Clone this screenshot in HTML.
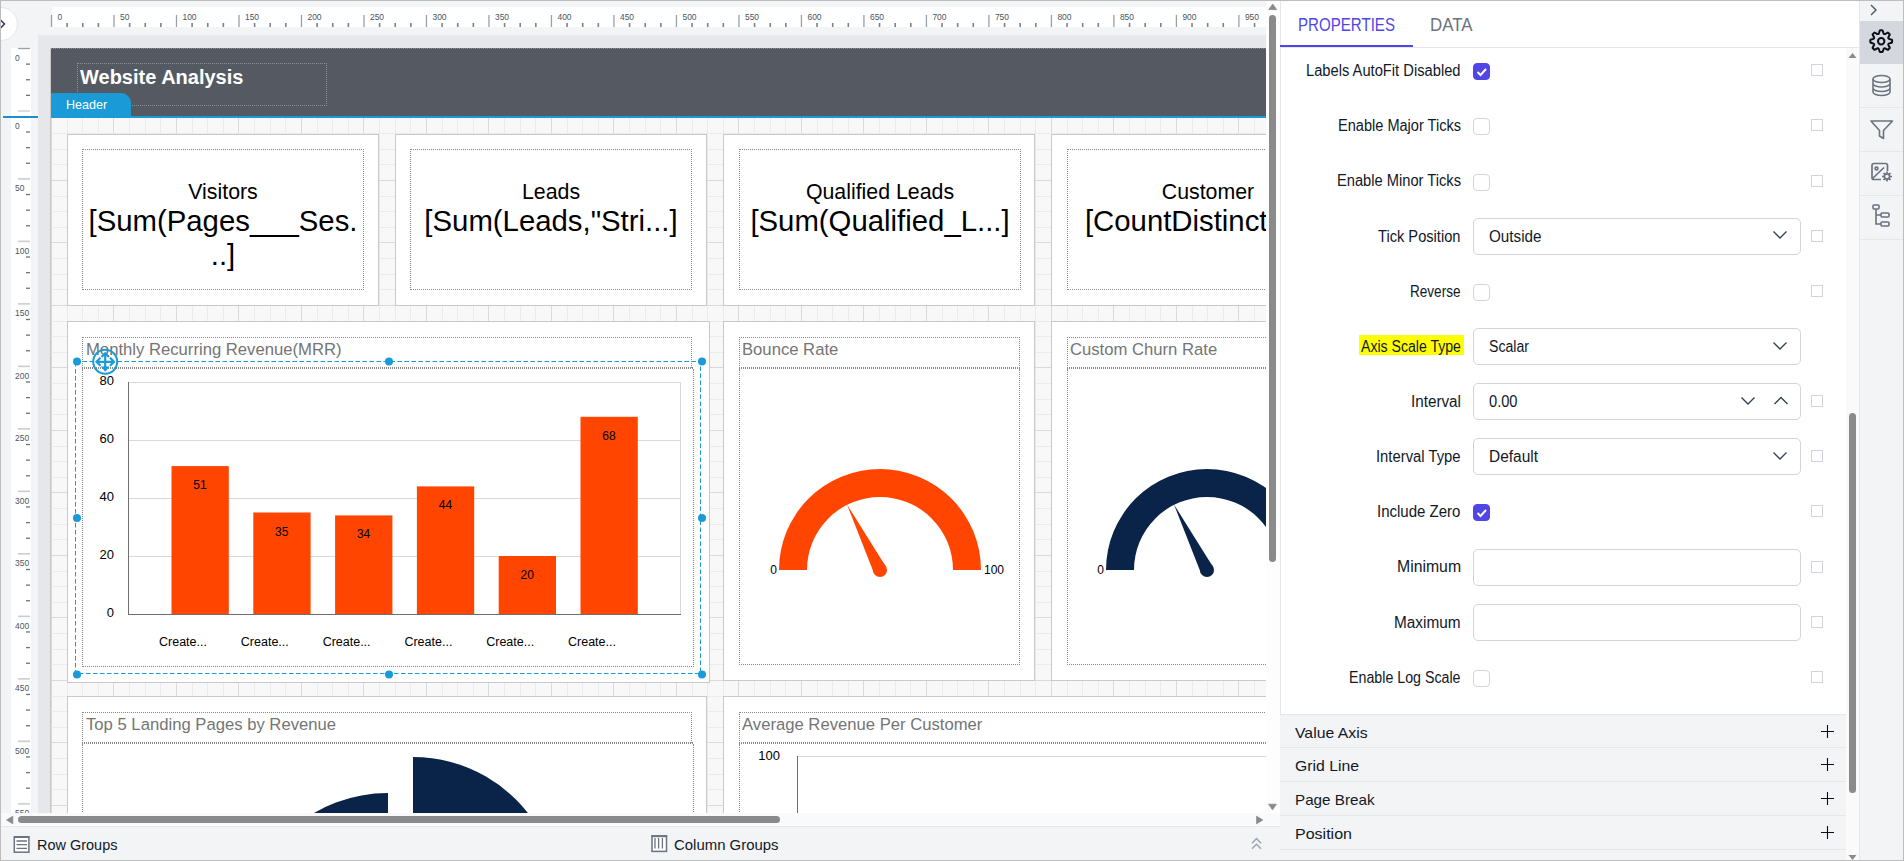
<!DOCTYPE html><html><head><meta charset="utf-8"><style>
*{box-sizing:border-box;margin:0;padding:0}
html,body{width:1904px;height:861px;overflow:hidden}
body{position:relative;background:#f3f4f6;font-family:"Liberation Sans",sans-serif;color:#111827}
.a{position:absolute}
.t{position:absolute;white-space:nowrap;line-height:1}
.dot{position:absolute;border:1px dotted #8a8a8a}
.card{position:absolute;background:#fff;border:1px solid #c9c9c9}
.lbl{position:absolute;white-space:nowrap;font-size:14.5px;line-height:1;text-align:right;right:444px;color:#1f2937}
.cb{position:absolute;left:1473px;width:17px;height:17px;border:1px solid #d1d5db;border-radius:4px;background:#fff}
.cbon{background:#4f46e5;border-color:#4f46e5}
.sq{position:absolute;left:1811px;width:12px;height:12px;border:1px solid #d1d5db;background:#fff}
.dd{position:absolute;left:1473px;width:328px;height:37px;border:1px solid #d1d5db;border-radius:5px;background:#fff}
.ddt{position:absolute;left:15px;top:10px;font-size:14.5px;line-height:1;color:#1f2937;white-space:nowrap}
.sec{position:absolute;left:1280px;width:566px;height:34px;background:#f3f4f6;border-top:1px solid #e5e7eb}
.sect{position:absolute;left:15px;top:10px;font-size:15px;line-height:1;color:#1f2937}
</style></head><body>
<div class="a" style="left:38px;top:35px;width:1228px;height:778px;background:#e5e7eb"></div>
<svg class="a" style="left:0;top:0" width="1266" height="35"><rect x="52" y="7" width="1214" height="20" fill="#fff"/><line x1="51.50" y1="15" x2="51.50" y2="27" stroke="#9aa0a8" stroke-width="1.3"/><text x="57.50" y="19.9" font-family="Liberation Sans" font-size="9.6" fill="#4b5563" transform="translate(57.50 0) scale(0.88 1) translate(-57.50 0)">0</text><line x1="67.12" y1="23" x2="67.12" y2="27" stroke="#7b828c" stroke-width="1.6"/><line x1="82.75" y1="23" x2="82.75" y2="27" stroke="#7b828c" stroke-width="1.6"/><line x1="98.37" y1="23" x2="98.37" y2="27" stroke="#7b828c" stroke-width="1.6"/><line x1="114.00" y1="15" x2="114.00" y2="27" stroke="#9aa0a8" stroke-width="1.3"/><text x="120.00" y="19.9" font-family="Liberation Sans" font-size="9.6" fill="#4b5563" transform="translate(120.00 0) scale(0.88 1) translate(-120.00 0)">50</text><line x1="129.62" y1="23" x2="129.62" y2="27" stroke="#7b828c" stroke-width="1.6"/><line x1="145.24" y1="23" x2="145.24" y2="27" stroke="#7b828c" stroke-width="1.6"/><line x1="160.87" y1="23" x2="160.87" y2="27" stroke="#7b828c" stroke-width="1.6"/><line x1="176.49" y1="15" x2="176.49" y2="27" stroke="#9aa0a8" stroke-width="1.3"/><text x="182.49" y="19.9" font-family="Liberation Sans" font-size="9.6" fill="#4b5563" transform="translate(182.49 0) scale(0.88 1) translate(-182.49 0)">100</text><line x1="192.11" y1="23" x2="192.11" y2="27" stroke="#7b828c" stroke-width="1.6"/><line x1="207.74" y1="23" x2="207.74" y2="27" stroke="#7b828c" stroke-width="1.6"/><line x1="223.36" y1="23" x2="223.36" y2="27" stroke="#7b828c" stroke-width="1.6"/><line x1="238.99" y1="15" x2="238.99" y2="27" stroke="#9aa0a8" stroke-width="1.3"/><text x="244.99" y="19.9" font-family="Liberation Sans" font-size="9.6" fill="#4b5563" transform="translate(244.99 0) scale(0.88 1) translate(-244.99 0)">150</text><line x1="254.61" y1="23" x2="254.61" y2="27" stroke="#7b828c" stroke-width="1.6"/><line x1="270.23" y1="23" x2="270.23" y2="27" stroke="#7b828c" stroke-width="1.6"/><line x1="285.86" y1="23" x2="285.86" y2="27" stroke="#7b828c" stroke-width="1.6"/><line x1="301.48" y1="15" x2="301.48" y2="27" stroke="#9aa0a8" stroke-width="1.3"/><text x="307.48" y="19.9" font-family="Liberation Sans" font-size="9.6" fill="#4b5563" transform="translate(307.48 0) scale(0.88 1) translate(-307.48 0)">200</text><line x1="317.10" y1="23" x2="317.10" y2="27" stroke="#7b828c" stroke-width="1.6"/><line x1="332.73" y1="23" x2="332.73" y2="27" stroke="#7b828c" stroke-width="1.6"/><line x1="348.35" y1="23" x2="348.35" y2="27" stroke="#7b828c" stroke-width="1.6"/><line x1="363.98" y1="15" x2="363.98" y2="27" stroke="#9aa0a8" stroke-width="1.3"/><text x="369.98" y="19.9" font-family="Liberation Sans" font-size="9.6" fill="#4b5563" transform="translate(369.98 0) scale(0.88 1) translate(-369.98 0)">250</text><line x1="379.60" y1="23" x2="379.60" y2="27" stroke="#7b828c" stroke-width="1.6"/><line x1="395.22" y1="23" x2="395.22" y2="27" stroke="#7b828c" stroke-width="1.6"/><line x1="410.85" y1="23" x2="410.85" y2="27" stroke="#7b828c" stroke-width="1.6"/><line x1="426.47" y1="15" x2="426.47" y2="27" stroke="#9aa0a8" stroke-width="1.3"/><text x="432.47" y="19.9" font-family="Liberation Sans" font-size="9.6" fill="#4b5563" transform="translate(432.47 0) scale(0.88 1) translate(-432.47 0)">300</text><line x1="442.09" y1="23" x2="442.09" y2="27" stroke="#7b828c" stroke-width="1.6"/><line x1="457.72" y1="23" x2="457.72" y2="27" stroke="#7b828c" stroke-width="1.6"/><line x1="473.34" y1="23" x2="473.34" y2="27" stroke="#7b828c" stroke-width="1.6"/><line x1="488.97" y1="15" x2="488.97" y2="27" stroke="#9aa0a8" stroke-width="1.3"/><text x="494.97" y="19.9" font-family="Liberation Sans" font-size="9.6" fill="#4b5563" transform="translate(494.97 0) scale(0.88 1) translate(-494.97 0)">350</text><line x1="504.59" y1="23" x2="504.59" y2="27" stroke="#7b828c" stroke-width="1.6"/><line x1="520.21" y1="23" x2="520.21" y2="27" stroke="#7b828c" stroke-width="1.6"/><line x1="535.84" y1="23" x2="535.84" y2="27" stroke="#7b828c" stroke-width="1.6"/><line x1="551.46" y1="15" x2="551.46" y2="27" stroke="#9aa0a8" stroke-width="1.3"/><text x="557.46" y="19.9" font-family="Liberation Sans" font-size="9.6" fill="#4b5563" transform="translate(557.46 0) scale(0.88 1) translate(-557.46 0)">400</text><line x1="567.08" y1="23" x2="567.08" y2="27" stroke="#7b828c" stroke-width="1.6"/><line x1="582.71" y1="23" x2="582.71" y2="27" stroke="#7b828c" stroke-width="1.6"/><line x1="598.33" y1="23" x2="598.33" y2="27" stroke="#7b828c" stroke-width="1.6"/><line x1="613.96" y1="15" x2="613.96" y2="27" stroke="#9aa0a8" stroke-width="1.3"/><text x="619.96" y="19.9" font-family="Liberation Sans" font-size="9.6" fill="#4b5563" transform="translate(619.96 0) scale(0.88 1) translate(-619.96 0)">450</text><line x1="629.58" y1="23" x2="629.58" y2="27" stroke="#7b828c" stroke-width="1.6"/><line x1="645.20" y1="23" x2="645.20" y2="27" stroke="#7b828c" stroke-width="1.6"/><line x1="660.83" y1="23" x2="660.83" y2="27" stroke="#7b828c" stroke-width="1.6"/><line x1="676.45" y1="15" x2="676.45" y2="27" stroke="#9aa0a8" stroke-width="1.3"/><text x="682.45" y="19.9" font-family="Liberation Sans" font-size="9.6" fill="#4b5563" transform="translate(682.45 0) scale(0.88 1) translate(-682.45 0)">500</text><line x1="692.07" y1="23" x2="692.07" y2="27" stroke="#7b828c" stroke-width="1.6"/><line x1="707.70" y1="23" x2="707.70" y2="27" stroke="#7b828c" stroke-width="1.6"/><line x1="723.32" y1="23" x2="723.32" y2="27" stroke="#7b828c" stroke-width="1.6"/><line x1="738.95" y1="15" x2="738.95" y2="27" stroke="#9aa0a8" stroke-width="1.3"/><text x="744.95" y="19.9" font-family="Liberation Sans" font-size="9.6" fill="#4b5563" transform="translate(744.95 0) scale(0.88 1) translate(-744.95 0)">550</text><line x1="754.57" y1="23" x2="754.57" y2="27" stroke="#7b828c" stroke-width="1.6"/><line x1="770.19" y1="23" x2="770.19" y2="27" stroke="#7b828c" stroke-width="1.6"/><line x1="785.82" y1="23" x2="785.82" y2="27" stroke="#7b828c" stroke-width="1.6"/><line x1="801.44" y1="15" x2="801.44" y2="27" stroke="#9aa0a8" stroke-width="1.3"/><text x="807.44" y="19.9" font-family="Liberation Sans" font-size="9.6" fill="#4b5563" transform="translate(807.44 0) scale(0.88 1) translate(-807.44 0)">600</text><line x1="817.06" y1="23" x2="817.06" y2="27" stroke="#7b828c" stroke-width="1.6"/><line x1="832.69" y1="23" x2="832.69" y2="27" stroke="#7b828c" stroke-width="1.6"/><line x1="848.31" y1="23" x2="848.31" y2="27" stroke="#7b828c" stroke-width="1.6"/><line x1="863.94" y1="15" x2="863.94" y2="27" stroke="#9aa0a8" stroke-width="1.3"/><text x="869.94" y="19.9" font-family="Liberation Sans" font-size="9.6" fill="#4b5563" transform="translate(869.94 0) scale(0.88 1) translate(-869.94 0)">650</text><line x1="879.56" y1="23" x2="879.56" y2="27" stroke="#7b828c" stroke-width="1.6"/><line x1="895.18" y1="23" x2="895.18" y2="27" stroke="#7b828c" stroke-width="1.6"/><line x1="910.81" y1="23" x2="910.81" y2="27" stroke="#7b828c" stroke-width="1.6"/><line x1="926.43" y1="15" x2="926.43" y2="27" stroke="#9aa0a8" stroke-width="1.3"/><text x="932.43" y="19.9" font-family="Liberation Sans" font-size="9.6" fill="#4b5563" transform="translate(932.43 0) scale(0.88 1) translate(-932.43 0)">700</text><line x1="942.05" y1="23" x2="942.05" y2="27" stroke="#7b828c" stroke-width="1.6"/><line x1="957.68" y1="23" x2="957.68" y2="27" stroke="#7b828c" stroke-width="1.6"/><line x1="973.30" y1="23" x2="973.30" y2="27" stroke="#7b828c" stroke-width="1.6"/><line x1="988.92" y1="15" x2="988.92" y2="27" stroke="#9aa0a8" stroke-width="1.3"/><text x="994.92" y="19.9" font-family="Liberation Sans" font-size="9.6" fill="#4b5563" transform="translate(994.92 0) scale(0.88 1) translate(-994.92 0)">750</text><line x1="1004.55" y1="23" x2="1004.55" y2="27" stroke="#7b828c" stroke-width="1.6"/><line x1="1020.17" y1="23" x2="1020.17" y2="27" stroke="#7b828c" stroke-width="1.6"/><line x1="1035.80" y1="23" x2="1035.80" y2="27" stroke="#7b828c" stroke-width="1.6"/><line x1="1051.42" y1="15" x2="1051.42" y2="27" stroke="#9aa0a8" stroke-width="1.3"/><text x="1057.42" y="19.9" font-family="Liberation Sans" font-size="9.6" fill="#4b5563" transform="translate(1057.42 0) scale(0.88 1) translate(-1057.42 0)">800</text><line x1="1067.04" y1="23" x2="1067.04" y2="27" stroke="#7b828c" stroke-width="1.6"/><line x1="1082.67" y1="23" x2="1082.67" y2="27" stroke="#7b828c" stroke-width="1.6"/><line x1="1098.29" y1="23" x2="1098.29" y2="27" stroke="#7b828c" stroke-width="1.6"/><line x1="1113.91" y1="15" x2="1113.91" y2="27" stroke="#9aa0a8" stroke-width="1.3"/><text x="1119.91" y="19.9" font-family="Liberation Sans" font-size="9.6" fill="#4b5563" transform="translate(1119.91 0) scale(0.88 1) translate(-1119.91 0)">850</text><line x1="1129.54" y1="23" x2="1129.54" y2="27" stroke="#7b828c" stroke-width="1.6"/><line x1="1145.16" y1="23" x2="1145.16" y2="27" stroke="#7b828c" stroke-width="1.6"/><line x1="1160.79" y1="23" x2="1160.79" y2="27" stroke="#7b828c" stroke-width="1.6"/><line x1="1176.41" y1="15" x2="1176.41" y2="27" stroke="#9aa0a8" stroke-width="1.3"/><text x="1182.41" y="19.9" font-family="Liberation Sans" font-size="9.6" fill="#4b5563" transform="translate(1182.41 0) scale(0.88 1) translate(-1182.41 0)">900</text><line x1="1192.03" y1="23" x2="1192.03" y2="27" stroke="#7b828c" stroke-width="1.6"/><line x1="1207.66" y1="23" x2="1207.66" y2="27" stroke="#7b828c" stroke-width="1.6"/><line x1="1223.28" y1="23" x2="1223.28" y2="27" stroke="#7b828c" stroke-width="1.6"/><line x1="1238.90" y1="15" x2="1238.90" y2="27" stroke="#9aa0a8" stroke-width="1.3"/><text x="1244.90" y="19.9" font-family="Liberation Sans" font-size="9.6" fill="#4b5563" transform="translate(1244.90 0) scale(0.88 1) translate(-1244.90 0)">950</text><line x1="1254.53" y1="23" x2="1254.53" y2="27" stroke="#7b828c" stroke-width="1.6"/></svg>
<svg class="a" style="left:0;top:0" width="38" height="813"><rect x="11" y="48" width="20" height="765" fill="#fff"/><line x1="18" y1="48.50" x2="30" y2="48.50" stroke="#9aa0a8" stroke-width="1.3"/><text x="15" y="61.30" font-family="Liberation Sans" font-size="9.6" fill="#4b5563" transform="translate(15 0) scale(0.88 1) translate(-15 0)">0</text><line x1="26" y1="64.12" x2="30" y2="64.12" stroke="#6b7280" stroke-width="1.3"/><line x1="26" y1="79.75" x2="30" y2="79.75" stroke="#6b7280" stroke-width="1.3"/><line x1="26" y1="95.37" x2="30" y2="95.37" stroke="#6b7280" stroke-width="1.3"/><line x1="18" y1="111.00" x2="30" y2="111.00" stroke="#c9ccd1" stroke-width="1.3"/><text x="15" y="128.90" font-family="Liberation Sans" font-size="9.6" fill="#4b5563" transform="translate(15 0) scale(0.88 1) translate(-15 0)">0</text><line x1="26" y1="132.02" x2="30" y2="132.02" stroke="#6b7280" stroke-width="1.3"/><line x1="26" y1="147.65" x2="30" y2="147.65" stroke="#6b7280" stroke-width="1.3"/><line x1="26" y1="163.27" x2="30" y2="163.27" stroke="#6b7280" stroke-width="1.3"/><line x1="18" y1="178.90" x2="30" y2="178.90" stroke="#c9ccd1" stroke-width="1.6"/><text x="15" y="191.40" font-family="Liberation Sans" font-size="9.6" fill="#4b5563" transform="translate(15 0) scale(0.88 1) translate(-15 0)">50</text><line x1="26" y1="194.52" x2="30" y2="194.52" stroke="#6b7280" stroke-width="1.3"/><line x1="26" y1="210.14" x2="30" y2="210.14" stroke="#6b7280" stroke-width="1.3"/><line x1="26" y1="225.77" x2="30" y2="225.77" stroke="#6b7280" stroke-width="1.3"/><line x1="18" y1="241.39" x2="30" y2="241.39" stroke="#c9ccd1" stroke-width="1.6"/><text x="15" y="253.89" font-family="Liberation Sans" font-size="9.6" fill="#4b5563" transform="translate(15 0) scale(0.88 1) translate(-15 0)">100</text><line x1="26" y1="257.01" x2="30" y2="257.01" stroke="#6b7280" stroke-width="1.3"/><line x1="26" y1="272.64" x2="30" y2="272.64" stroke="#6b7280" stroke-width="1.3"/><line x1="26" y1="288.26" x2="30" y2="288.26" stroke="#6b7280" stroke-width="1.3"/><line x1="18" y1="303.88" x2="30" y2="303.88" stroke="#c9ccd1" stroke-width="1.6"/><text x="15" y="316.38" font-family="Liberation Sans" font-size="9.6" fill="#4b5563" transform="translate(15 0) scale(0.88 1) translate(-15 0)">150</text><line x1="26" y1="319.51" x2="30" y2="319.51" stroke="#6b7280" stroke-width="1.3"/><line x1="26" y1="335.13" x2="30" y2="335.13" stroke="#6b7280" stroke-width="1.3"/><line x1="26" y1="350.76" x2="30" y2="350.76" stroke="#6b7280" stroke-width="1.3"/><line x1="18" y1="366.38" x2="30" y2="366.38" stroke="#c9ccd1" stroke-width="1.6"/><text x="15" y="378.88" font-family="Liberation Sans" font-size="9.6" fill="#4b5563" transform="translate(15 0) scale(0.88 1) translate(-15 0)">200</text><line x1="26" y1="382.00" x2="30" y2="382.00" stroke="#6b7280" stroke-width="1.3"/><line x1="26" y1="397.63" x2="30" y2="397.63" stroke="#6b7280" stroke-width="1.3"/><line x1="26" y1="413.25" x2="30" y2="413.25" stroke="#6b7280" stroke-width="1.3"/><line x1="18" y1="428.88" x2="30" y2="428.88" stroke="#c9ccd1" stroke-width="1.6"/><text x="15" y="441.38" font-family="Liberation Sans" font-size="9.6" fill="#4b5563" transform="translate(15 0) scale(0.88 1) translate(-15 0)">250</text><line x1="26" y1="444.50" x2="30" y2="444.50" stroke="#6b7280" stroke-width="1.3"/><line x1="26" y1="460.12" x2="30" y2="460.12" stroke="#6b7280" stroke-width="1.3"/><line x1="26" y1="475.75" x2="30" y2="475.75" stroke="#6b7280" stroke-width="1.3"/><line x1="18" y1="491.37" x2="30" y2="491.37" stroke="#c9ccd1" stroke-width="1.6"/><text x="15" y="503.87" font-family="Liberation Sans" font-size="9.6" fill="#4b5563" transform="translate(15 0) scale(0.88 1) translate(-15 0)">300</text><line x1="26" y1="506.99" x2="30" y2="506.99" stroke="#6b7280" stroke-width="1.3"/><line x1="26" y1="522.62" x2="30" y2="522.62" stroke="#6b7280" stroke-width="1.3"/><line x1="26" y1="538.24" x2="30" y2="538.24" stroke="#6b7280" stroke-width="1.3"/><line x1="18" y1="553.87" x2="30" y2="553.87" stroke="#c9ccd1" stroke-width="1.6"/><text x="15" y="566.37" font-family="Liberation Sans" font-size="9.6" fill="#4b5563" transform="translate(15 0) scale(0.88 1) translate(-15 0)">350</text><line x1="26" y1="569.49" x2="30" y2="569.49" stroke="#6b7280" stroke-width="1.3"/><line x1="26" y1="585.11" x2="30" y2="585.11" stroke="#6b7280" stroke-width="1.3"/><line x1="26" y1="600.74" x2="30" y2="600.74" stroke="#6b7280" stroke-width="1.3"/><line x1="18" y1="616.36" x2="30" y2="616.36" stroke="#c9ccd1" stroke-width="1.6"/><text x="15" y="628.86" font-family="Liberation Sans" font-size="9.6" fill="#4b5563" transform="translate(15 0) scale(0.88 1) translate(-15 0)">400</text><line x1="26" y1="631.98" x2="30" y2="631.98" stroke="#6b7280" stroke-width="1.3"/><line x1="26" y1="647.61" x2="30" y2="647.61" stroke="#6b7280" stroke-width="1.3"/><line x1="26" y1="663.23" x2="30" y2="663.23" stroke="#6b7280" stroke-width="1.3"/><line x1="18" y1="678.85" x2="30" y2="678.85" stroke="#c9ccd1" stroke-width="1.6"/><text x="15" y="691.35" font-family="Liberation Sans" font-size="9.6" fill="#4b5563" transform="translate(15 0) scale(0.88 1) translate(-15 0)">450</text><line x1="26" y1="694.48" x2="30" y2="694.48" stroke="#6b7280" stroke-width="1.3"/><line x1="26" y1="710.10" x2="30" y2="710.10" stroke="#6b7280" stroke-width="1.3"/><line x1="26" y1="725.73" x2="30" y2="725.73" stroke="#6b7280" stroke-width="1.3"/><line x1="18" y1="741.35" x2="30" y2="741.35" stroke="#c9ccd1" stroke-width="1.6"/><text x="15" y="753.85" font-family="Liberation Sans" font-size="9.6" fill="#4b5563" transform="translate(15 0) scale(0.88 1) translate(-15 0)">500</text><line x1="26" y1="756.97" x2="30" y2="756.97" stroke="#6b7280" stroke-width="1.3"/><line x1="26" y1="772.60" x2="30" y2="772.60" stroke="#6b7280" stroke-width="1.3"/><line x1="26" y1="788.22" x2="30" y2="788.22" stroke="#6b7280" stroke-width="1.3"/><line x1="18" y1="803.84" x2="30" y2="803.84" stroke="#c9ccd1" stroke-width="1.6"/><text x="15" y="816.34" font-family="Liberation Sans" font-size="9.6" fill="#4b5563" transform="translate(15 0) scale(0.88 1) translate(-15 0)">550</text><rect x="3" y="116" width="35" height="2" fill="#1a8fd0"/></svg>
<svg class="a" style="left:0;top:0" width="1266" height="813"><rect x="50" y="118" width="1216" height="695" fill="#f8f8f8"/><line x1="51.5" y1="118" x2="51.5" y2="813" stroke="#dadada"/><line x1="67.5" y1="118" x2="67.5" y2="813" stroke="#ebebeb"/><line x1="82.5" y1="118" x2="82.5" y2="813" stroke="#ebebeb"/><line x1="98.5" y1="118" x2="98.5" y2="813" stroke="#ebebeb"/><line x1="113.5" y1="118" x2="113.5" y2="813" stroke="#dadada"/><line x1="129.5" y1="118" x2="129.5" y2="813" stroke="#ebebeb"/><line x1="145.5" y1="118" x2="145.5" y2="813" stroke="#ebebeb"/><line x1="160.5" y1="118" x2="160.5" y2="813" stroke="#ebebeb"/><line x1="176.5" y1="118" x2="176.5" y2="813" stroke="#dadada"/><line x1="192.5" y1="118" x2="192.5" y2="813" stroke="#ebebeb"/><line x1="207.5" y1="118" x2="207.5" y2="813" stroke="#ebebeb"/><line x1="223.5" y1="118" x2="223.5" y2="813" stroke="#ebebeb"/><line x1="238.5" y1="118" x2="238.5" y2="813" stroke="#dadada"/><line x1="254.5" y1="118" x2="254.5" y2="813" stroke="#ebebeb"/><line x1="270.5" y1="118" x2="270.5" y2="813" stroke="#ebebeb"/><line x1="285.5" y1="118" x2="285.5" y2="813" stroke="#ebebeb"/><line x1="301.5" y1="118" x2="301.5" y2="813" stroke="#dadada"/><line x1="317.5" y1="118" x2="317.5" y2="813" stroke="#ebebeb"/><line x1="332.5" y1="118" x2="332.5" y2="813" stroke="#ebebeb"/><line x1="348.5" y1="118" x2="348.5" y2="813" stroke="#ebebeb"/><line x1="363.5" y1="118" x2="363.5" y2="813" stroke="#dadada"/><line x1="379.5" y1="118" x2="379.5" y2="813" stroke="#ebebeb"/><line x1="395.5" y1="118" x2="395.5" y2="813" stroke="#ebebeb"/><line x1="410.5" y1="118" x2="410.5" y2="813" stroke="#ebebeb"/><line x1="426.5" y1="118" x2="426.5" y2="813" stroke="#dadada"/><line x1="442.5" y1="118" x2="442.5" y2="813" stroke="#ebebeb"/><line x1="457.5" y1="118" x2="457.5" y2="813" stroke="#ebebeb"/><line x1="473.5" y1="118" x2="473.5" y2="813" stroke="#ebebeb"/><line x1="488.5" y1="118" x2="488.5" y2="813" stroke="#dadada"/><line x1="504.5" y1="118" x2="504.5" y2="813" stroke="#ebebeb"/><line x1="520.5" y1="118" x2="520.5" y2="813" stroke="#ebebeb"/><line x1="535.5" y1="118" x2="535.5" y2="813" stroke="#ebebeb"/><line x1="551.5" y1="118" x2="551.5" y2="813" stroke="#dadada"/><line x1="567.5" y1="118" x2="567.5" y2="813" stroke="#ebebeb"/><line x1="582.5" y1="118" x2="582.5" y2="813" stroke="#ebebeb"/><line x1="598.5" y1="118" x2="598.5" y2="813" stroke="#ebebeb"/><line x1="613.5" y1="118" x2="613.5" y2="813" stroke="#dadada"/><line x1="629.5" y1="118" x2="629.5" y2="813" stroke="#ebebeb"/><line x1="645.5" y1="118" x2="645.5" y2="813" stroke="#ebebeb"/><line x1="660.5" y1="118" x2="660.5" y2="813" stroke="#ebebeb"/><line x1="676.5" y1="118" x2="676.5" y2="813" stroke="#dadada"/><line x1="692.5" y1="118" x2="692.5" y2="813" stroke="#ebebeb"/><line x1="707.5" y1="118" x2="707.5" y2="813" stroke="#ebebeb"/><line x1="723.5" y1="118" x2="723.5" y2="813" stroke="#ebebeb"/><line x1="738.5" y1="118" x2="738.5" y2="813" stroke="#dadada"/><line x1="754.5" y1="118" x2="754.5" y2="813" stroke="#ebebeb"/><line x1="770.5" y1="118" x2="770.5" y2="813" stroke="#ebebeb"/><line x1="785.5" y1="118" x2="785.5" y2="813" stroke="#ebebeb"/><line x1="801.5" y1="118" x2="801.5" y2="813" stroke="#dadada"/><line x1="817.5" y1="118" x2="817.5" y2="813" stroke="#ebebeb"/><line x1="832.5" y1="118" x2="832.5" y2="813" stroke="#ebebeb"/><line x1="848.5" y1="118" x2="848.5" y2="813" stroke="#ebebeb"/><line x1="863.5" y1="118" x2="863.5" y2="813" stroke="#dadada"/><line x1="879.5" y1="118" x2="879.5" y2="813" stroke="#ebebeb"/><line x1="895.5" y1="118" x2="895.5" y2="813" stroke="#ebebeb"/><line x1="910.5" y1="118" x2="910.5" y2="813" stroke="#ebebeb"/><line x1="926.5" y1="118" x2="926.5" y2="813" stroke="#dadada"/><line x1="942.5" y1="118" x2="942.5" y2="813" stroke="#ebebeb"/><line x1="957.5" y1="118" x2="957.5" y2="813" stroke="#ebebeb"/><line x1="973.5" y1="118" x2="973.5" y2="813" stroke="#ebebeb"/><line x1="988.5" y1="118" x2="988.5" y2="813" stroke="#dadada"/><line x1="1004.5" y1="118" x2="1004.5" y2="813" stroke="#ebebeb"/><line x1="1020.5" y1="118" x2="1020.5" y2="813" stroke="#ebebeb"/><line x1="1035.5" y1="118" x2="1035.5" y2="813" stroke="#ebebeb"/><line x1="1051.5" y1="118" x2="1051.5" y2="813" stroke="#dadada"/><line x1="1067.5" y1="118" x2="1067.5" y2="813" stroke="#ebebeb"/><line x1="1082.5" y1="118" x2="1082.5" y2="813" stroke="#ebebeb"/><line x1="1098.5" y1="118" x2="1098.5" y2="813" stroke="#ebebeb"/><line x1="1113.5" y1="118" x2="1113.5" y2="813" stroke="#dadada"/><line x1="1129.5" y1="118" x2="1129.5" y2="813" stroke="#ebebeb"/><line x1="1145.5" y1="118" x2="1145.5" y2="813" stroke="#ebebeb"/><line x1="1160.5" y1="118" x2="1160.5" y2="813" stroke="#ebebeb"/><line x1="1176.5" y1="118" x2="1176.5" y2="813" stroke="#dadada"/><line x1="1192.5" y1="118" x2="1192.5" y2="813" stroke="#ebebeb"/><line x1="1207.5" y1="118" x2="1207.5" y2="813" stroke="#ebebeb"/><line x1="1223.5" y1="118" x2="1223.5" y2="813" stroke="#ebebeb"/><line x1="1238.5" y1="118" x2="1238.5" y2="813" stroke="#dadada"/><line x1="1254.5" y1="118" x2="1254.5" y2="813" stroke="#ebebeb"/><line x1="50" y1="133.5" x2="1266" y2="133.5" stroke="#ebebeb"/><line x1="50" y1="149.5" x2="1266" y2="149.5" stroke="#ebebeb"/><line x1="50" y1="164.5" x2="1266" y2="164.5" stroke="#ebebeb"/><line x1="50" y1="180.5" x2="1266" y2="180.5" stroke="#dadada"/><line x1="50" y1="196.5" x2="1266" y2="196.5" stroke="#ebebeb"/><line x1="50" y1="211.5" x2="1266" y2="211.5" stroke="#ebebeb"/><line x1="50" y1="227.5" x2="1266" y2="227.5" stroke="#ebebeb"/><line x1="50" y1="242.5" x2="1266" y2="242.5" stroke="#dadada"/><line x1="50" y1="258.5" x2="1266" y2="258.5" stroke="#ebebeb"/><line x1="50" y1="274.5" x2="1266" y2="274.5" stroke="#ebebeb"/><line x1="50" y1="289.5" x2="1266" y2="289.5" stroke="#ebebeb"/><line x1="50" y1="305.5" x2="1266" y2="305.5" stroke="#dadada"/><line x1="50" y1="321.5" x2="1266" y2="321.5" stroke="#ebebeb"/><line x1="50" y1="336.5" x2="1266" y2="336.5" stroke="#ebebeb"/><line x1="50" y1="352.5" x2="1266" y2="352.5" stroke="#ebebeb"/><line x1="50" y1="367.5" x2="1266" y2="367.5" stroke="#dadada"/><line x1="50" y1="383.5" x2="1266" y2="383.5" stroke="#ebebeb"/><line x1="50" y1="399.5" x2="1266" y2="399.5" stroke="#ebebeb"/><line x1="50" y1="414.5" x2="1266" y2="414.5" stroke="#ebebeb"/><line x1="50" y1="430.5" x2="1266" y2="430.5" stroke="#dadada"/><line x1="50" y1="446.5" x2="1266" y2="446.5" stroke="#ebebeb"/><line x1="50" y1="461.5" x2="1266" y2="461.5" stroke="#ebebeb"/><line x1="50" y1="477.5" x2="1266" y2="477.5" stroke="#ebebeb"/><line x1="50" y1="492.5" x2="1266" y2="492.5" stroke="#dadada"/><line x1="50" y1="508.5" x2="1266" y2="508.5" stroke="#ebebeb"/><line x1="50" y1="524.5" x2="1266" y2="524.5" stroke="#ebebeb"/><line x1="50" y1="539.5" x2="1266" y2="539.5" stroke="#ebebeb"/><line x1="50" y1="555.5" x2="1266" y2="555.5" stroke="#dadada"/><line x1="50" y1="571.5" x2="1266" y2="571.5" stroke="#ebebeb"/><line x1="50" y1="586.5" x2="1266" y2="586.5" stroke="#ebebeb"/><line x1="50" y1="602.5" x2="1266" y2="602.5" stroke="#ebebeb"/><line x1="50" y1="617.5" x2="1266" y2="617.5" stroke="#dadada"/><line x1="50" y1="633.5" x2="1266" y2="633.5" stroke="#ebebeb"/><line x1="50" y1="649.5" x2="1266" y2="649.5" stroke="#ebebeb"/><line x1="50" y1="664.5" x2="1266" y2="664.5" stroke="#ebebeb"/><line x1="50" y1="680.5" x2="1266" y2="680.5" stroke="#dadada"/><line x1="50" y1="696.5" x2="1266" y2="696.5" stroke="#ebebeb"/><line x1="50" y1="711.5" x2="1266" y2="711.5" stroke="#ebebeb"/><line x1="50" y1="727.5" x2="1266" y2="727.5" stroke="#ebebeb"/><line x1="50" y1="742.5" x2="1266" y2="742.5" stroke="#dadada"/><line x1="50" y1="758.5" x2="1266" y2="758.5" stroke="#ebebeb"/><line x1="50" y1="774.5" x2="1266" y2="774.5" stroke="#ebebeb"/><line x1="50" y1="789.5" x2="1266" y2="789.5" stroke="#ebebeb"/><line x1="50" y1="805.5" x2="1266" y2="805.5" stroke="#dadada"/><line x1="50.5" y1="48" x2="50.5" y2="813" stroke="#c8c8c8"/></svg>
<div class="a" style="left:51px;top:48px;width:1215px;height:68px;background:#555a62;border-top:1px dotted #8d9299"></div>
<div class="a" style="left:51px;top:116px;width:1215px;height:2px;background:#1a9ad6"></div>
<div class="a" style="left:77px;top:63px;width:250px;height:43px;border:1px dotted #8d9299"></div>
<div class="t" style="left:80px;top:67px;font-size:20px;font-weight:bold;color:#fff">Website Analysis</div>
<div class="a" style="left:51px;top:93px;width:80px;height:25px;background:#1a9bd7;border-top-right-radius:10px"></div>
<div class="t" style="left:66px;top:97.5px;font-size:13.5px;color:#fff;transform:scaleX(0.9276);transform-origin:0 0;">Header</div>
<div class="card" style="left:67px;top:134px;width:312px;height:172px"></div>
<div class="dot" style="left:82px;top:149px;width:282px;height:141px"></div>
<div class="t" style="left:82px;top:182px;width:282px;text-align:center;font-size:21.33px;color:#000">Visitors</div>
<div class="t" style="left:82px;top:206px;width:282px;text-align:center;font-size:29.33px;color:#000;overflow:visible">[Sum(Pages___Ses.</div>
<div class="t" style="left:82px;top:240px;width:282px;text-align:center;font-size:29.33px;color:#000;overflow:visible">..]</div>
<div class="card" style="left:395px;top:134px;width:312px;height:172px"></div>
<div class="dot" style="left:410px;top:149px;width:282px;height:141px"></div>
<div class="t" style="left:410px;top:182px;width:282px;text-align:center;font-size:21.33px;color:#000">Leads</div>
<div class="t" style="left:410px;top:206px;width:282px;text-align:center;font-size:29.33px;color:#000;overflow:visible">[Sum(Leads,"Stri...]</div>
<div class="card" style="left:723px;top:134px;width:312px;height:172px"></div>
<div class="dot" style="left:739px;top:149px;width:282px;height:141px"></div>
<div class="t" style="left:739px;top:182px;width:282px;text-align:center;font-size:21.33px;color:#000">Qualified Leads</div>
<div class="t" style="left:739px;top:206px;width:282px;text-align:center;font-size:29.33px;color:#000;overflow:visible">[Sum(Qualified_L...]</div>
<div class="card" style="left:1051px;top:134px;width:312px;height:172px"></div>
<div class="dot" style="left:1067px;top:149px;width:282px;height:141px"></div>
<div class="t" style="left:1067px;top:182px;width:282px;text-align:center;font-size:21.33px;color:#000">Customer</div>
<div class="t" style="left:1067px;top:206px;width:282px;text-align:center;font-size:29.33px;color:#000;overflow:visible">[CountDistinct(C...]</div>
<div class="card" style="left:67px;top:321px;width:643px;height:362px"></div>
<div class="card" style="left:723px;top:321px;width:312px;height:360px"></div>
<div class="card" style="left:1051px;top:321px;width:312px;height:360px"></div>
<div class="card" style="left:67px;top:696px;width:640px;height:200px"></div>
<div class="card" style="left:723px;top:696px;width:640px;height:200px"></div>
<div class="dot" style="left:82px;top:337px;width:610px;height:31px;border-bottom:none"></div>
<div class="dot" style="left:82px;top:369px;width:612px;height:298px;border-top:none"></div>
<div class="a" style="left:82px;top:367px;width:612px;height:2px;background:repeating-linear-gradient(90deg,#8a8a8a 0 1px,transparent 1px 2px)"></div>
<div class="t" style="left:86px;top:342px;font-size:16.67px;color:#757575">Monthly Recurring Revenue(MRR)</div>
<svg class="a" style="left:0;top:0" width="720" height="700" font-family="Liberation Sans"><text x="114" y="617" text-anchor="end" font-size="13" fill="#000">0</text><line x1="129" y1="556.5" x2="681" y2="556.5" stroke="#d9d9d9"/><text x="114" y="559" text-anchor="end" font-size="13" fill="#000">20</text><line x1="129" y1="498.5" x2="681" y2="498.5" stroke="#d9d9d9"/><text x="114" y="501" text-anchor="end" font-size="13" fill="#000">40</text><line x1="129" y1="440.5" x2="681" y2="440.5" stroke="#d9d9d9"/><text x="114" y="443" text-anchor="end" font-size="13" fill="#000">60</text><line x1="129" y1="382.5" x2="681" y2="382.5" stroke="#d9d9d9"/><text x="114" y="385" text-anchor="end" font-size="13" fill="#000">80</text><line x1="680.5" y1="382" x2="680.5" y2="614" stroke="#d9d9d9"/><rect x="171.5" y="466.1" width="57.3" height="147.9" fill="#ff4500"/><text x="200.0" y="489.1" text-anchor="middle" font-size="12" fill="#000">51</text><text x="183.0" y="646" text-anchor="middle" font-size="12.5" fill="#000">Create...</text><rect x="253.3" y="512.5" width="57.3" height="101.5" fill="#ff4500"/><text x="281.8" y="535.5" text-anchor="middle" font-size="12" fill="#000">35</text><text x="264.8" y="646" text-anchor="middle" font-size="12.5" fill="#000">Create...</text><rect x="335.1" y="515.4" width="57.3" height="98.6" fill="#ff4500"/><text x="363.6" y="538.4" text-anchor="middle" font-size="12" fill="#000">34</text><text x="346.6" y="646" text-anchor="middle" font-size="12.5" fill="#000">Create...</text><rect x="416.9" y="486.4" width="57.3" height="127.6" fill="#ff4500"/><text x="445.4" y="509.4" text-anchor="middle" font-size="12" fill="#000">44</text><text x="428.4" y="646" text-anchor="middle" font-size="12.5" fill="#000">Create...</text><rect x="498.7" y="556.0" width="57.3" height="58.0" fill="#ff4500"/><text x="527.2" y="579.0" text-anchor="middle" font-size="12" fill="#000">20</text><text x="510.2" y="646" text-anchor="middle" font-size="12.5" fill="#000">Create...</text><rect x="580.5" y="416.8" width="57.3" height="197.2" fill="#ff4500"/><text x="609.0" y="439.8" text-anchor="middle" font-size="12" fill="#000">68</text><text x="592.0" y="646" text-anchor="middle" font-size="12.5" fill="#000">Create...</text><line x1="128.5" y1="382" x2="128.5" y2="615" stroke="#6f6f6f"/><line x1="128" y1="614.5" x2="681" y2="614.5" stroke="#6f6f6f"/><rect x="75.5" y="361.5" width="625" height="312" fill="none" stroke="#1a9ad6" stroke-dasharray="4.5 2.5"/><circle cx="77" cy="361.5" r="4" fill="#1a9ad6"/><circle cx="389" cy="361.5" r="4" fill="#1a9ad6"/><circle cx="702" cy="361.5" r="4" fill="#1a9ad6"/><circle cx="77" cy="518" r="4" fill="#1a9ad6"/><circle cx="702" cy="518" r="4" fill="#1a9ad6"/><circle cx="77" cy="674.5" r="4" fill="#1a9ad6"/><circle cx="389" cy="674.5" r="4" fill="#1a9ad6"/><circle cx="702" cy="674.5" r="4" fill="#1a9ad6"/><circle cx="105.2" cy="361.8" r="12" fill="none" stroke="#1a9ad6" stroke-width="2"/><path d="M105.2 354v15M97 361.8h16.5M101.5 357l3.7-3.7 3.7 3.7M100.5 357.8l-4 4 4 4M110 357.8l4 4-4 4" fill="none" stroke="#1a9ad6" stroke-width="2.2"/><path d="M100.8 366.5h8.8l-4.4 5.3Z" fill="#1a9ad6"/></svg>
<div class="dot" style="left:739px;top:337px;width:281px;height:31px;border-bottom:none"></div><div class="dot" style="left:739px;top:369px;width:281px;height:296px;border-top:none"></div><div class="a" style="left:739px;top:367px;width:281px;height:2px;background:repeating-linear-gradient(90deg,#8a8a8a 0 1px,transparent 1px 2px)"></div><div class="t" style="left:742px;top:342px;font-size:16.67px;color:#757575">Bounce Rate</div><svg class="a" style="left:0;top:0" width="1266" height="700" font-family="Liberation Sans"><path d="M779 570A101 101 0 0 1 981 570L953 570A73 73 0 0 0 807 570Z" fill="#ff4500"/><path d="M847 504.5L886.1 566.9L873.9 573.1Z" fill="#ff4500"/><circle cx="880" cy="570" r="7" fill="#ff4500"/><text x="777" y="574" text-anchor="end" font-size="12" fill="#000">0</text><text x="984" y="574" font-size="12" fill="#000">100</text></svg>
<div class="dot" style="left:1067px;top:337px;width:281px;height:31px;border-bottom:none"></div><div class="dot" style="left:1067px;top:369px;width:281px;height:296px;border-top:none"></div><div class="a" style="left:1067px;top:367px;width:281px;height:2px;background:repeating-linear-gradient(90deg,#8a8a8a 0 1px,transparent 1px 2px)"></div><div class="t" style="left:1070px;top:342px;font-size:16.67px;color:#757575">Custom Churn Rate</div><svg class="a" style="left:0;top:0" width="1266" height="700" font-family="Liberation Sans"><path d="M1106 570A101 101 0 0 1 1308 570L1280 570A73 73 0 0 0 1134 570Z" fill="#0a2348"/><path d="M1174 504.5L1213.1 566.9L1200.9 573.1Z" fill="#0a2348"/><circle cx="1207" cy="570" r="7" fill="#0a2348"/><text x="1104" y="574" text-anchor="end" font-size="12" fill="#000">0</text><text x="1311" y="574" font-size="12" fill="#000">100</text></svg>
<div class="dot" style="left:82px;top:712px;width:610px;height:31px;border-bottom:none"></div>
<div class="dot" style="left:82px;top:744px;width:612px;height:100px;border-top:none"></div>
<div class="a" style="left:82px;top:742px;width:612px;height:2px;background:repeating-linear-gradient(90deg,#8a8a8a 0 1px,transparent 1px 2px)"></div>
<div class="t" style="left:86px;top:716.5px;font-size:16.67px;color:#757575">Top 5 Landing Pages by Revenue</div>
<svg class="a" style="left:0;top:0" width="720" height="813"><path d="M413 903V757A146 146 0 0 1 539.4 830L413 830Z" fill="#0a2348"/><path d="M388 940V793A147 147 0 0 0 290.5 830L388 830Z" fill="#0a2348"/></svg>
<div class="dot" style="left:739px;top:712px;width:600px;height:31px;border-bottom:none"></div>
<div class="dot" style="left:739px;top:744px;width:600px;height:100px;border-top:none"></div>
<div class="a" style="left:739px;top:742px;width:600px;height:2px;background:repeating-linear-gradient(90deg,#8a8a8a 0 1px,transparent 1px 2px)"></div>
<div class="t" style="left:742px;top:716.5px;font-size:16.67px;color:#757575">Average Revenue Per Customer</div>
<svg class="a" style="left:0;top:0" width="1266" height="813" font-family="Liberation Sans"><text x="780" y="760" text-anchor="end" font-size="13" fill="#000">100</text><line x1="797" y1="756.5" x2="1266" y2="756.5" stroke="#d9d9d9"/><line x1="797.5" y1="756" x2="797.5" y2="813" stroke="#6f6f6f"/></svg>
<div class="a" style="left:1266px;top:1px;width:14px;height:825px;background:#fdfdfd"></div>
<div class="a" style="left:1266px;top:813px;width:14px;height:13px;background:#fafafa"></div>
<div class="a" style="left:1269px;top:15px;width:7px;height:547px;background:#8a8a8a;border-radius:4px"></div>
<div class="a" style="left:1px;top:813px;width:1265px;height:13px;background:#fafafa"></div>
<div class="a" style="left:18px;top:816px;width:762px;height:7px;background:#8a8a8a;border-radius:4px"></div>
<svg class="a" style="left:0;top:0" width="1280" height="830"><g fill="#8a8a8a" stroke="#8a8a8a" stroke-width="0.8" stroke-linejoin="round"><path d="M1268.8 9.6L1272.7 4L1276.6 9.6Z"/><path d="M1268.6 804.2L1276.4 804.2L1272.5 809.8Z"/><path d="M1256.6 816.2L1256.6 823.8L1262.8 820Z"/><path d="M12.8 816.2L12.8 823.8L6.6 820Z"/></g></svg>
<div class="a" style="left:1px;top:826px;width:1279px;height:34px;background:#f3f4f6;border-top:1px solid #e5e7eb"></div>
<svg class="a" style="left:13px;top:835px" width="18" height="19"><rect x="1.3" y="1.8" width="14.6" height="15.4" fill="#fff" stroke="#6b7280" stroke-width="1.5"/><rect x="1" y="1" width="15.2" height="2" fill="#6b7280"/><path d="M3.5 6h10.5M3.5 9.6h10.5M3.5 13.4h10.5" stroke="#6b7280" stroke-width="1.3"/></svg>
<div class="t" style="left:37px;top:837px;font-size:15px;color:#111827;transform:scaleX(0.9652);transform-origin:0 0;">Row Groups</div>
<svg class="a" style="left:650px;top:834px" width="18" height="19"><rect x="2" y="2" width="14.5" height="15.4" fill="#fff" stroke="#6b7280" stroke-width="1.5"/><rect x="1.3" y="1.2" width="15.9" height="2" fill="#6b7280"/><path d="M5 4v10.5M8.6 4v10.5M12.4 4v10.5" stroke="#6b7280" stroke-width="1.3"/></svg>
<div class="t" style="left:674px;top:837px;font-size:15px;color:#111827;transform:scaleX(0.9952);transform-origin:0 0;">Column Groups</div>
<svg class="a" style="left:1250px;top:836px" width="14" height="14"><path d="M2 7.2L6.5 2.5L11 7.2M2 12.7L6.5 8.2L11 12.7" fill="none" stroke="#9ca3af" stroke-width="1.4"/></svg>
<div class="a" style="left:-16px;top:6.5px;width:34px;height:34px;border-radius:50%;background:#fff;border:1px solid #e5e7eb"></div>
<svg class="a" style="left:0;top:18px" width="8" height="12"><path d="M0.5 2L4.5 6L0.5 10" fill="none" stroke="#2b3550" stroke-width="1.5"/></svg>
<div class="a" style="left:1280px;top:1px;width:579px;height:859px;background:#fff;border-left:1px solid #e5e7eb"></div>
<div class="t" style="left:1298px;top:17.3px;font-size:17.5px;color:#4f46e5;transform:scaleX(0.8622);transform-origin:0 0;">PROPERTIES</div>
<div class="t" style="left:1430px;top:17.3px;font-size:17.5px;color:#6b7280;transform:scaleX(0.9637);transform-origin:0 0;">DATA</div>
<div class="a" style="left:1280px;top:47px;width:579px;height:1px;background:#e5e7eb"></div>
<div class="a" style="left:1280px;top:45px;width:133px;height:2px;background:#4f46e5"></div>
<div class="t" style="left:1306.0px;top:63.16px;font-size:16px;color:#111827;transform:scaleX(0.9191);transform-origin:0 0;">Labels AutoFit Disabled</div>
<div class="cb cbon" style="top:63.30px"><svg width="15" height="15" style="position:absolute;left:0;top:0"><path d="M3.5 8L6.5 11L12 5" fill="none" stroke="#fff" stroke-width="2"/></svg></div>
<div class="sq" style="top:64.30px"></div>
<div class="t" style="left:1337.5px;top:118.30px;font-size:16px;color:#111827;transform:scaleX(0.9101);transform-origin:0 0;">Enable Major Ticks</div>
<div class="cb" style="top:118.44px"></div>
<div class="sq" style="top:119.44px"></div>
<div class="t" style="left:1336.5px;top:173.44px;font-size:16px;color:#111827;transform:scaleX(0.9175);transform-origin:0 0;">Enable Minor Ticks</div>
<div class="cb" style="top:173.58px"></div>
<div class="sq" style="top:174.58px"></div>
<div class="t" style="left:1378.0px;top:228.58px;font-size:16px;color:#111827;transform:scaleX(0.9153);transform-origin:0 0;">Tick Position</div>
<div class="dd" style="top:217.92px"><div class="t" style="left:14.5px;top:9.76px;font-size:16px;color:#111827;transform:scaleX(0.9520);transform-origin:0 0">Outside</div><svg class="a" style="right:12px;top:10.5px" width="16" height="12"><path d="M1.5 2.5L8 9L14.5 2.5" fill="none" stroke="#374151" stroke-width="1.4"/></svg></div>
<div class="sq" style="top:229.72px"></div>
<div class="t" style="left:1410.0px;top:283.72px;font-size:16px;color:#111827;transform:scaleX(0.8469);transform-origin:0 0;">Reverse</div>
<div class="cb" style="top:283.86px"></div>
<div class="sq" style="top:284.86px"></div>
<div class="a" style="left:1359px;top:334.7px;width:105px;height:20px;background:#ffff00"></div>
<div class="t" style="left:1360.5px;top:338.86px;font-size:16px;color:#111827;transform:scaleX(0.8803);transform-origin:0 0;">Axis Scale Type</div>
<div class="dd" style="top:328.20px"><div class="t" style="left:14.5px;top:9.76px;font-size:16px;color:#111827;transform:scaleX(0.8824);transform-origin:0 0">Scalar</div><svg class="a" style="right:12px;top:10.5px" width="16" height="12"><path d="M1.5 2.5L8 9L14.5 2.5" fill="none" stroke="#374151" stroke-width="1.4"/></svg></div>
<div class="t" style="left:1410.5px;top:394.00px;font-size:16px;color:#111827;transform:scaleX(0.9527);transform-origin:0 0;">Interval</div>
<div class="dd" style="top:383.34px"><div class="t" style="left:14.5px;top:9.76px;font-size:16px;color:#111827;transform:scaleX(0.9150);transform-origin:0 0">0.00</div><svg class="a" style="right:44px;top:10.5px" width="16" height="12"><path d="M1.5 2.5L8 9L14.5 2.5" fill="none" stroke="#374151" stroke-width="1.4"/></svg><svg class="a" style="right:11.5px;top:10.5px" width="16" height="12"><path d="M1.5 9L8 2.5L14.5 9" fill="none" stroke="#374151" stroke-width="1.4"/></svg></div>
<div class="sq" style="top:395.14px"></div>
<div class="t" style="left:1376.0px;top:449.14px;font-size:16px;color:#111827;transform:scaleX(0.9255);transform-origin:0 0;">Interval Type</div>
<div class="dd" style="top:438.48px"><div class="t" style="left:14.5px;top:9.76px;font-size:16px;color:#111827;transform:scaleX(0.9671);transform-origin:0 0">Default</div><svg class="a" style="right:12px;top:10.5px" width="16" height="12"><path d="M1.5 2.5L8 9L14.5 2.5" fill="none" stroke="#374151" stroke-width="1.4"/></svg></div>
<div class="sq" style="top:450.28px"></div>
<div class="t" style="left:1377.0px;top:504.28px;font-size:16px;color:#111827;transform:scaleX(0.9386);transform-origin:0 0;">Include Zero</div>
<div class="cb cbon" style="top:504.42px"><svg width="15" height="15" style="position:absolute;left:0;top:0"><path d="M3.5 8L6.5 11L12 5" fill="none" stroke="#fff" stroke-width="2"/></svg></div>
<div class="sq" style="top:505.42px"></div>
<div class="t" style="left:1396.5px;top:559.42px;font-size:16px;color:#111827;transform:scaleX(0.9868);transform-origin:0 0;">Minimum</div>
<div class="dd" style="top:548.76px"></div>
<div class="sq" style="top:560.56px"></div>
<div class="t" style="left:1394.0px;top:614.56px;font-size:16px;color:#111827;transform:scaleX(0.9591);transform-origin:0 0;">Maximum</div>
<div class="dd" style="top:603.90px"></div>
<div class="sq" style="top:615.70px"></div>
<div class="t" style="left:1349.0px;top:669.70px;font-size:16px;color:#111827;transform:scaleX(0.8889);transform-origin:0 0;">Enable Log Scale</div>
<div class="cb" style="top:669.84px"></div>
<div class="sq" style="top:670.84px"></div>
<div class="sec" style="top:714px"><div class="t" style="left:15px;top:10px;font-size:15px;color:#111827;transform:scaleX(1.0522);transform-origin:0 0;">Value Axis</div><svg class="a" style="left:540px;top:10px" width="14" height="14"><path d="M7.5 0v13M1 6.5h13" stroke="#0b0f19" stroke-width="1.1"/></svg></div>
<div class="sec" style="top:747px"><div class="t" style="left:15px;top:10px;font-size:15px;color:#111827;transform:scaleX(1.0509);transform-origin:0 0;">Grid Line</div><svg class="a" style="left:540px;top:10px" width="14" height="14"><path d="M7.5 0v13M1 6.5h13" stroke="#0b0f19" stroke-width="1.1"/></svg></div>
<div class="sec" style="top:781px"><div class="t" style="left:15px;top:10px;font-size:15px;color:#111827;transform:scaleX(1.0140);transform-origin:0 0;">Page Break</div><svg class="a" style="left:540px;top:10px" width="14" height="14"><path d="M7.5 0v13M1 6.5h13" stroke="#0b0f19" stroke-width="1.1"/></svg></div>
<div class="sec" style="top:815px"><div class="t" style="left:15px;top:10px;font-size:15px;color:#111827;transform:scaleX(1.0674);transform-origin:0 0;">Position</div><svg class="a" style="left:540px;top:10px" width="14" height="14"><path d="M7.5 0v13M1 6.5h13" stroke="#0b0f19" stroke-width="1.1"/></svg></div>
<div class="sec" style="top:849px"></div>
<div class="a" style="left:1846px;top:48px;width:13px;height:812px;background:#fafafa"></div>
<div class="a" style="left:1849px;top:413px;width:7px;height:380px;background:#8a8a8a;border-radius:4px"></div>
<svg class="a" style="left:1846px;top:50px" width="13" height="10"><path d="M2.5 8L6.5 3L10.5 8Z" fill="#8a8a8a"/></svg>
<svg class="a" style="left:1846px;top:853px" width="13" height="9"><path d="M2.5 2L6.5 7L10.5 2Z" fill="#8a8a8a"/></svg>
<div class="a" style="left:1859px;top:1px;width:44px;height:859px;background:#f3f4f6;border-left:1px solid #e5e7eb"></div>
<svg class="a" style="left:1868px;top:3px" width="12" height="14"><path d="M3 2L8 7L3 12" fill="none" stroke="#4b5563" stroke-width="1.4"/></svg>
<div class="a" style="left:1860px;top:21px;width:43px;height:43px;background:#d4d7dd"></div>
<div class="a" style="left:1860px;top:107px;width:43px;height:1px;background:#e5e7eb"></div>
<div class="a" style="left:1860px;top:151px;width:43px;height:1px;background:#e5e7eb"></div>
<div class="a" style="left:1860px;top:195px;width:43px;height:1px;background:#e5e7eb"></div>
<div class="a" style="left:1860px;top:239px;width:43px;height:1px;background:#e5e7eb"></div>
<svg class="a" style="left:0;top:0" width="1904" height="260"><path d="M1881.2 30.3 L1881.5 30.3 L1881.8 30.3 L1882.1 30.3 L1882.3 30.4 L1882.6 30.5 L1882.8 31.0 L1883.0 31.5 L1883.1 32.1 L1883.3 32.6 L1883.4 33.0 L1883.5 33.3 L1883.7 33.6 L1883.8 33.8 L1884.0 33.9 L1884.2 34.0 L1884.4 34.1 L1884.6 34.1 L1884.8 34.1 L1885.1 34.0 L1885.5 33.8 L1885.8 33.6 L1886.3 33.4 L1886.8 33.1 L1887.3 32.9 L1887.8 32.6 L1888.1 32.7 L1888.3 32.9 L1888.5 33.1 L1888.7 33.3 L1888.9 33.5 L1889.1 33.7 L1889.3 33.9 L1889.5 34.1 L1889.7 34.3 L1889.8 34.6 L1889.5 35.1 L1889.3 35.6 L1889.0 36.1 L1888.8 36.6 L1888.6 36.9 L1888.4 37.3 L1888.3 37.6 L1888.3 37.8 L1888.3 38.0 L1888.4 38.2 L1888.5 38.4 L1888.6 38.6 L1888.8 38.7 L1889.1 38.9 L1889.4 39.0 L1889.8 39.1 L1890.3 39.3 L1890.9 39.4 L1891.4 39.6 L1891.9 39.8 L1892.0 40.1 L1892.1 40.3 L1892.1 40.6 L1892.1 40.9 L1892.1 41.2 L1892.1 41.5 L1892.1 41.8 L1892.1 42.1 L1892.0 42.3 L1891.9 42.6 L1891.4 42.8 L1890.9 43.0 L1890.3 43.1 L1889.8 43.3 L1889.4 43.4 L1889.1 43.5 L1888.8 43.7 L1888.6 43.8 L1888.5 44.0 L1888.4 44.2 L1888.3 44.4 L1888.3 44.6 L1888.3 44.8 L1888.4 45.1 L1888.6 45.5 L1888.8 45.8 L1889.0 46.3 L1889.3 46.8 L1889.5 47.3 L1889.8 47.8 L1889.7 48.1 L1889.5 48.3 L1889.3 48.5 L1889.1 48.7 L1888.9 48.9 L1888.7 49.1 L1888.5 49.3 L1888.3 49.5 L1888.1 49.7 L1887.8 49.8 L1887.3 49.5 L1886.8 49.3 L1886.3 49.0 L1885.8 48.8 L1885.5 48.6 L1885.1 48.4 L1884.8 48.3 L1884.6 48.3 L1884.4 48.3 L1884.2 48.4 L1884.0 48.5 L1883.8 48.6 L1883.7 48.8 L1883.5 49.1 L1883.4 49.4 L1883.3 49.8 L1883.1 50.3 L1883.0 50.9 L1882.8 51.4 L1882.6 51.9 L1882.3 52.0 L1882.1 52.1 L1881.8 52.1 L1881.5 52.1 L1881.2 52.1 L1880.9 52.1 L1880.6 52.1 L1880.3 52.1 L1880.1 52.0 L1879.8 51.9 L1879.6 51.4 L1879.4 50.9 L1879.3 50.3 L1879.1 49.8 L1879.0 49.4 L1878.9 49.1 L1878.7 48.8 L1878.6 48.6 L1878.4 48.5 L1878.2 48.4 L1878.0 48.3 L1877.8 48.3 L1877.6 48.3 L1877.3 48.4 L1876.9 48.6 L1876.6 48.8 L1876.1 49.0 L1875.6 49.3 L1875.1 49.5 L1874.6 49.8 L1874.3 49.7 L1874.1 49.5 L1873.9 49.3 L1873.7 49.1 L1873.5 48.9 L1873.3 48.7 L1873.1 48.5 L1872.9 48.3 L1872.7 48.1 L1872.6 47.8 L1872.9 47.3 L1873.1 46.8 L1873.4 46.3 L1873.6 45.8 L1873.8 45.5 L1874.0 45.1 L1874.1 44.8 L1874.1 44.6 L1874.1 44.4 L1874.0 44.2 L1873.9 44.0 L1873.8 43.8 L1873.6 43.7 L1873.3 43.5 L1873.0 43.4 L1872.6 43.3 L1872.1 43.1 L1871.5 43.0 L1871.0 42.8 L1870.5 42.6 L1870.4 42.3 L1870.3 42.1 L1870.3 41.8 L1870.3 41.5 L1870.3 41.2 L1870.3 40.9 L1870.3 40.6 L1870.3 40.3 L1870.4 40.1 L1870.5 39.8 L1871.0 39.6 L1871.5 39.4 L1872.1 39.3 L1872.6 39.1 L1873.0 39.0 L1873.3 38.9 L1873.6 38.7 L1873.8 38.6 L1873.9 38.4 L1874.0 38.2 L1874.1 38.0 L1874.1 37.8 L1874.1 37.6 L1874.0 37.3 L1873.8 36.9 L1873.6 36.6 L1873.4 36.1 L1873.1 35.6 L1872.9 35.1 L1872.6 34.6 L1872.7 34.3 L1872.9 34.1 L1873.1 33.9 L1873.3 33.7 L1873.5 33.5 L1873.7 33.3 L1873.9 33.1 L1874.1 32.9 L1874.3 32.7 L1874.6 32.6 L1875.1 32.9 L1875.6 33.1 L1876.1 33.4 L1876.6 33.6 L1876.9 33.8 L1877.3 34.0 L1877.6 34.1 L1877.8 34.1 L1878.0 34.1 L1878.2 34.0 L1878.4 33.9 L1878.6 33.8 L1878.7 33.6 L1878.9 33.3 L1879.0 33.0 L1879.1 32.6 L1879.3 32.1 L1879.4 31.5 L1879.6 31.0 L1879.8 30.5 L1880.1 30.4 L1880.3 30.3 L1880.6 30.3 L1880.9 30.3Z" fill="none" stroke="#0b0f19" stroke-width="2" stroke-linejoin="round"/><circle cx="1881.2" cy="41.2" r="3.2" fill="none" stroke="#0b0f19" stroke-width="2"/><g fill="none" stroke="#6b7280" stroke-width="1.6"><ellipse cx="1881.5" cy="79" rx="8.5" ry="3.5"/><path d="M1873 79v13c0 2 4 3.5 8.5 3.5s8.5-1.5 8.5-3.5V79M1873 83.5c0 2 4 3.5 8.5 3.5s8.5-1.5 8.5-3.5M1873 88c0 2 4 3.5 8.5 3.5s8.5-1.5 8.5-3.5"/></g><path d="M1871 121h21.5l-9 9.5v8l-4-2.5v-5.5Z" fill="none" stroke="#6b7280" stroke-width="1.6" stroke-linejoin="round"/><g fill="none" stroke="#6b7280" stroke-width="1.7"><path d="M1881 179.5h-7a2 2 0 0 1-2-2v-12a2 2 0 0 1 2-2h11.5a2 2 0 0 1 2 2v5.5"/><path d="M1872.5 178.5L1884 167.5"/><circle cx="1876.5" cy="168.5" r="1.4"/><circle cx="1887" cy="176.5" r="2.6"/><path d="M1887 171.5v2M1887 179.5v2M1882 176.5h2M1890 176.5h2M1883.5 173l1.4 1.4M1889.1 178.6l1.4 1.4M1883.5 180l1.4-1.4M1889.1 174.4l1.4-1.4"/></g><g fill="none" stroke="#6b7280" stroke-width="1.6"><rect x="1873" y="205" width="6" height="4" rx="1"/><rect x="1881" y="213" width="8" height="4" rx="1"/><rect x="1881" y="222" width="8" height="4" rx="1"/><path d="M1876 209v15h5M1876 215h5"/></g></svg>
<div class="a" style="left:0;top:0;width:1904px;height:1px;background:#bdbdbd"></div>
<div class="a" style="left:0;top:0;width:1px;height:861px;background:#bdbdbd"></div>
<div class="a" style="left:1903px;top:0;width:1px;height:861px;background:#bdbdbd"></div>
<div class="a" style="left:0;top:860px;width:1904px;height:1px;background:#bdbdbd"></div>
</body></html>
